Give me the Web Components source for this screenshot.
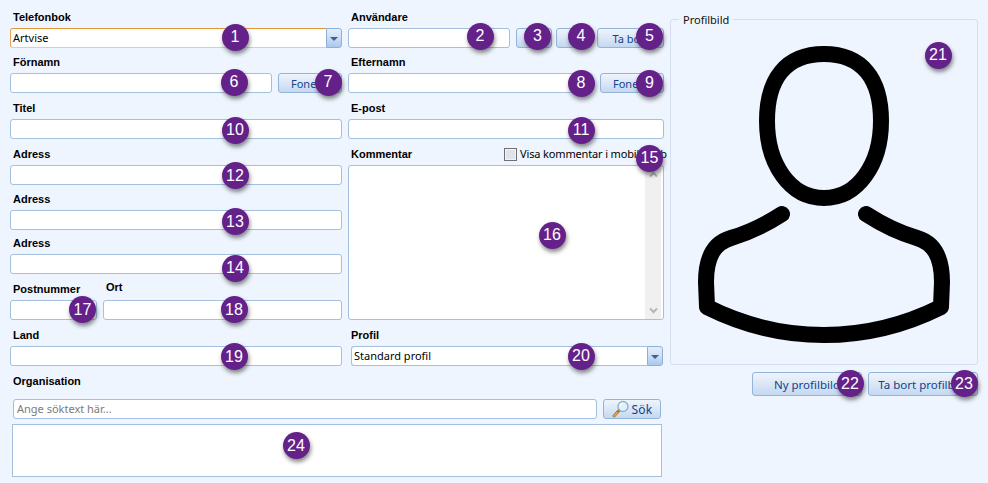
<!DOCTYPE html>
<html lang="sv">
<head>
<meta charset="utf-8">
<title>Telefonbok</title>
<style>
    html, body { margin: 0; background: #eef5fe; }
</style>
</head>
<body>
<contact-form></contact-form>

<script>
// text input, also used as the bare white box of the list
class XInput extends HTMLElement {
    constructor(){
        super();
        this.attachShadow({mode:"open"});
        this.shadowRoot.innerHTML = `
        <style>
            :host { display: block; box-sizing: border-box; height: 20px; flex: 1 1 auto; min-width: 0;
                    background: #fff; border: 1px solid #a3c0de; border-radius: 3px; overflow: hidden;
                    font: 11px "Noto Sans", sans-serif; color: #7b7b7b; padding-left: 3px; line-height: 17px; }
        </style><slot></slot>`;
    }
}
customElements.define("x-input", XInput);

class XCombo extends HTMLElement {
    constructor(){
        super();
        this.attachShadow({mode:"open"});
        this.shadowRoot.innerHTML = `
        <style>
            :host { display: flex; box-sizing: border-box; height: 20px; flex: 1 1 auto;
                    font: 11px "Noto Sans", sans-serif; color: #000; }
            #text { flex: 1; background: #fff; border: 1px solid #a3c0de; border-right: 0; border-radius: 3px 0 0 3px;
                    padding-left: 2px; line-height: 17px; }
            #arrow { width: 16px; box-sizing: border-box; border: 1px solid #8eb0d4; border-radius: 0 3px 3px 0;
                     background: linear-gradient(#e4eefb, #cfe0f5 45%, #a9c8ec);
                     display: flex; align-items: center; justify-content: center; }
            #arrow::after { content: ""; border: 4px solid transparent; border-top: 4px solid #3f5f95; border-bottom: 0; margin-top: 1px; }
            :host([focused]) #text { border-color: #e39536 transparent #f7c98a #e8a352; }
        </style>
        <div id="text"><slot></slot></div><div id="arrow"></div>`;
    }
}
customElements.define("x-combo", XCombo);

class XButton extends HTMLElement {
    constructor(){
        super();
        this.attachShadow({mode:"open"});
        this.shadowRoot.innerHTML = `
        <style>
            :host { display: flex; align-items: center; justify-content: center; gap: 2px; box-sizing: border-box; height: 20px; flex: none;
                    border: 1px solid #94b5d8; border-radius: 3px; background: linear-gradient(#eef4fc, #dbe7f7 50%, #c3d8f2);
                    font: 11px "Noto Sans", sans-serif; color: #15428b; white-space: nowrap; overflow: hidden; }
        </style><slot></slot>`;
    }
}
customElements.define("x-button", XButton);

class XBadge extends HTMLElement {
    constructor(){
        super();
        this.attachShadow({mode:"open"});
        this.shadowRoot.innerHTML = `
        <style>
            :host { position: absolute; width: 27px; height: 27px; margin: -13.5px 0 0 -13.5px; border-radius: 50%;
                    background: #65218a; color: #fff; box-shadow: 1px 3px 4px rgba(40,40,40,.55);
                    display: flex; align-items: center; justify-content: center;
                    font: 16px "Liberation Sans", sans-serif; }
        </style><slot></slot>`;
    }
    connectedCallback(){
        this.style.left = this.getAttribute("x") + "px";
        this.style.top = this.getAttribute("y") + "px";
    }
}
customElements.define("x-badge", XBadge);

// bold caption above one or more controls
class FormField extends HTMLElement {
    constructor(){
        super();
        this.attachShadow({mode:"open"});
        this.shadowRoot.innerHTML = `
        <style>
            :host { display: block; margin-top: var(--top, 0); }
            #head { display: flex; justify-content: space-between; height: 18px; padding-left: var(--label-left, 3px); }
            #label { font: bold 11px/14px "Liberation Sans", sans-serif; color: #000; margin-top: var(--label-shift, 0); }
            #row { display: flex; gap: 6px; }
        </style>
        <div id="head"><span id="label"></span><slot name="extra"></slot></div>
        <div id="row"><slot></slot></div>`;
    }
    connectedCallback(){
        this.shadowRoot.querySelector("#label").textContent = this.getAttribute("label");
    }
}
customElements.define("form-field", FormField);

class XCheck extends HTMLElement {
    constructor(){
        super();
        this.attachShadow({mode:"open"});
        this.shadowRoot.innerHTML = `
        <style>
            :host { display: flex; gap: 3px; margin-right: -3px; height: 15px; font: 11px/14px "Noto Sans", sans-serif; letter-spacing: -.15px; color: #000; white-space: nowrap; }
            #box { width: 13px; height: 13px; box-sizing: border-box; margin-top: 1px; border: 1px solid #707070; box-shadow: inset 0 0 0 1px #f4f4f4; background: #dfe4ea; }
        </style><div id="box"></div><slot></slot>`;
    }
}
customElements.define("x-check", XCheck);

class XMemo extends HTMLElement {
    constructor(){
        super();
        this.attachShadow({mode:"open"});
        this.shadowRoot.innerHTML = `
        <style>
            :host { display: flex; justify-content: flex-end; box-sizing: border-box; width: 100%; height: 155px;
                    background: #fff; border: 1px solid #a3c0de; border-radius: 3px; padding-right: 2px; }
            #bar { width: 16px; background: #f0f0f0; display: flex; flex-direction: column; justify-content: space-between; align-items: center; padding: 5px 0; }
            svg { display: block; }
        </style>
        <div id="bar">
            <svg width="9" height="7" viewBox="0 0 9 7"><path d="M1 5.5 4.5 2 8 5.5" fill="none" stroke="#b4b4b4" stroke-width="2"/></svg>
            <svg width="9" height="7" viewBox="0 0 9 7"><path d="M1 1.5 4.5 5 8 1.5" fill="none" stroke="#b4b4b4" stroke-width="2"/></svg>
        </div>`;
    }
}
customElements.define("x-memo", XMemo);

class ProfilePicture extends HTMLElement {
    constructor(){
        super();
        this.attachShadow({mode:"open"});
        this.shadowRoot.innerHTML = `
        <style>
            :host { display: block; width: 308px; }
            fieldset { box-sizing: border-box; height: 352px; margin: 3px 0 0; padding: 0; border: 1px solid #d3deef; border-radius: 3px; }
            legend { margin-left: 8px; padding: 0 4px; font: 11px/13px "Noto Sans", sans-serif; color: #111; }
            svg { display: block; width: 306px; height: 344px; margin-top: -7px; }
            #buttons { display: flex; justify-content: flex-end; gap: 6px; margin-top: 7px; }
            x-button { width: 110px; height: 24px; font-size: 11.5px; }
        </style>
        <fieldset>
            <legend>Profilbild</legend>
            <svg viewBox="671 20 306 344" fill="none" stroke="#000" stroke-width="16" stroke-linecap="round" stroke-linejoin="round">
                <path d="M824 55C862 55 881 80 881 122C881 165 858 199 824 199C790 199 767 165 767 122C767 80 786 55 824 55Z"/>
                <path d="M782 215C765 226 748 234 731 239C714 244 706 258 706 283L707 308C745 327 785 336 824 336C863 336 903 327 941 308L942 283C942 258 934 244 917 239C900 234 883 226 866 215"/>
            </svg>
        </fieldset>
        <div id="buttons"><x-button>Ny profilbild</x-button><x-button>Ta bort profilbild</x-button></div>`;
    }
}
customElements.define("profile-picture", ProfilePicture);

class ContactForm extends HTMLElement {
    constructor(){
        super();
        this.attachShadow({mode:"open"});
        this.shadowRoot.innerHTML = `
        <style>
            :host { display: block; position: relative; width: 988px; height: 483px; overflow: hidden; background: #eef5fe; }
            #page { display: flex; padding: 10px 10px 0; gap: 6px; }
            #left { width: 654px; flex: none; }
            #cols { display: flex; gap: 6px; }
            #c1 { width: 332px; }
            #c2 { width: 316px; }
            #org { padding: 8px 0 0 3px; }
            #org .cap { height: 18px; font: bold 11px/15px "Liberation Sans", sans-serif; color: #000; margin-bottom: 7px; }
            #search { display: flex; gap: 6px; width: 648px; }
            #search x-button { width: 58px; font-size: 12px; letter-spacing: .2px; }
            #list { display: block; flex: none; box-sizing: border-box; width: 650px; height: 53px; margin: 5px 0 0 -1px; border-radius: 0; }
            #pair { display: flex; gap: 6px; }
            #post { width: 87px; flex: none; }
            #ort { flex: 1; }
            .b36 { width: 36px; }
            .b67 { width: 67px; }
            .b64 { width: 64px; }
        </style>
        <div id="page">
            <div id="left">
                <div id="cols">
                    <div id="c1">
                        <form-field label="Telefonbok"><x-combo focused>Artvise</x-combo></form-field>
                        <form-field label="Förnamn" style="--top:7px"><x-input></x-input><x-button class="b64">Fonetik</x-button></form-field>
                        <form-field label="Titel" style="--top:8px"><x-input></x-input></form-field>
                        <form-field label="Adress" style="--top:8px"><x-input></x-input></form-field>
                        <form-field label="Adress" style="--top:7px"><x-input></x-input></form-field>
                        <form-field label="Adress" style="--top:6px"><x-input></x-input></form-field>
                        <div id="pair">
                            <form-field id="post" label="Postnummer" style="--top:8px"><x-input></x-input></form-field>
                            <form-field id="ort" label="Ort" style="--top:8px;--label-shift:-2px"><x-input></x-input></form-field>
                        </div>
                        <form-field label="Land" style="--top:8px"><x-input></x-input></form-field>
                    </div>
                    <div id="c2">
                        <form-field label="Användare"><x-input></x-input><x-button class="b36"></x-button><x-button class="b36" style="margin-left:-2px"></x-button><x-button class="b67" style="margin-left:-1px">Ta bort</x-button></form-field>
                        <form-field label="Efternamn" style="--top:7px"><x-input></x-input><x-button class="b64" style="margin-left:1px">Fonetik</x-button></form-field>
                        <form-field label="E-post" style="--top:8px"><x-input></x-input></form-field>
                        <form-field label="Kommentar" style="--top:8px"><x-check slot="extra">Visa kommentar i mobilwebb</x-check><x-memo></x-memo></form-field>
                        <form-field label="Profil" style="--top:8px"><x-combo style="margin:0 1px 0 3px">Standard profil</x-combo></form-field>
                    </div>
                </div>
                <div id="org">
                    <div class="cap">Organisation</div>
                    <div id="search">
                        <x-input>Ange söktext här...</x-input>
                        <x-button>
                            <svg width="18" height="18" viewBox="0 0 18 18">
                                <path d="M2 16 7 10.5" stroke="#a8743a" stroke-width="3" stroke-linecap="round"/>
                                <path d="M2 16 5 12.7" stroke="#f0a53e" stroke-width="1.6" stroke-linecap="round"/>
                                <circle cx="11" cy="6.5" r="5" fill="#dff1fc" stroke="#8fb4cf" stroke-width="1.4"/>
                                <path d="M8 6.5A3 3 0 0 1 11 3.5" fill="none" stroke="#fff" stroke-width="1.5"/>
                            </svg>Sök</x-button>
                    </div>
                    <x-input id="list"></x-input>
                </div>
            </div>
            <profile-picture></profile-picture>
        </div>
        <x-badge x="235" y="37">1</x-badge>
        <x-badge x="480" y="36">2</x-badge>
        <x-badge x="537.5" y="36">3</x-badge>
        <x-badge x="581" y="36">4</x-badge>
        <x-badge x="649.5" y="36">5</x-badge>
        <x-badge x="234" y="82">6</x-badge>
        <x-badge x="328" y="82">7</x-badge>
        <x-badge x="581" y="83">8</x-badge>
        <x-badge x="649.5" y="83">9</x-badge>
        <x-badge x="235" y="130">10</x-badge>
        <x-badge x="581" y="130">11</x-badge>
        <x-badge x="235" y="175.5">12</x-badge>
        <x-badge x="235" y="221.5">13</x-badge>
        <x-badge x="235" y="268">14</x-badge>
        <x-badge x="649.5" y="158">15</x-badge>
        <x-badge x="552" y="235">16</x-badge>
        <x-badge x="82.5" y="309.5">17</x-badge>
        <x-badge x="234" y="309.5">18</x-badge>
        <x-badge x="234" y="356.5">19</x-badge>
        <x-badge x="581" y="356">20</x-badge>
        <x-badge x="938" y="55">21</x-badge>
        <x-badge x="850" y="383.5">22</x-badge>
        <x-badge x="964" y="383.5">23</x-badge>
        <x-badge x="296" y="445.5">24</x-badge>`;
    }
}
customElements.define("contact-form", ContactForm);
</script>
</body>
</html>
